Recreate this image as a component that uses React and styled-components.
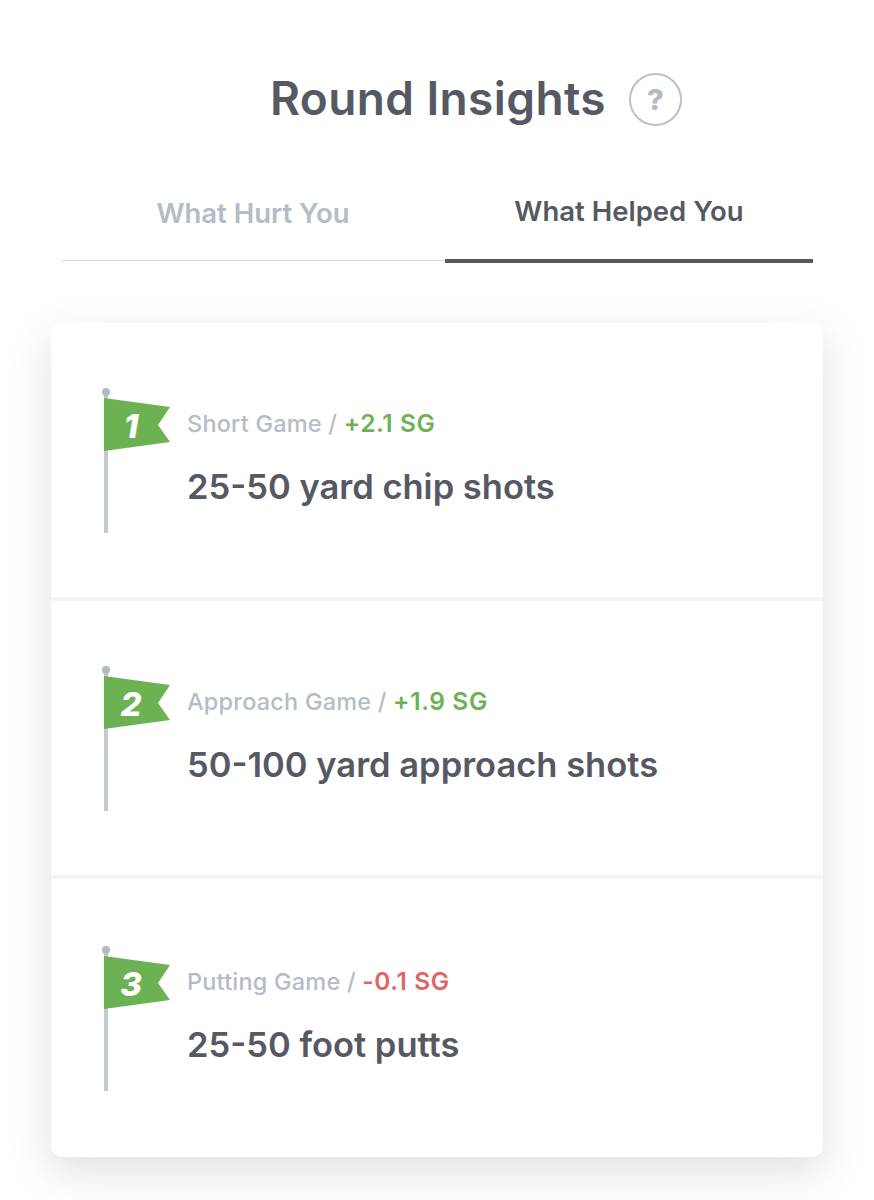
import React from 'react'
import styled, { createGlobalStyle } from 'styled-components'

const GlobalStyle = createGlobalStyle`
  html, body {
    margin: 0;
    padding: 0;
    background: #ffffff;
  }
  body {
    font-family: 'Inter', 'Noto Sans', sans-serif;
    overflow: hidden;
  }
`

const insights = [
  { rank: 1, area: 'Short Game', sg: '+2.1 SG', good: true, title: '25-50 yard chip shots' },
  { rank: 2, area: 'Approach Game', sg: '+1.9 SG', good: true, title: '50-100 yard approach shots' },
  { rank: 3, area: 'Putting Game', sg: '-0.1 SG', good: false, title: '25-50 foot putts' },
]

function Flag({ rank }) {
  return (
    <FlagWrap>
      <svg width="68" height="145" viewBox="0 0 68 145">
        <rect x="0" y="6" width="4" height="139" fill="#c3c9d0" />
        <circle cx="2" cy="4" r="4" fill="#b1bac5" />
        <path d="M0 10 L66 19 L54 37 L66 54 L0 63 Z" fill="#6cb253" />
      </svg>
      <FlagNumber>{rank}</FlagNumber>
    </FlagWrap>
  )
}

export default function App() {
  return (
    <Page>
      <GlobalStyle />
      <Header>
        <Title>Round Insights</Title>
        <HelpIcon>?</HelpIcon>
      </Header>
      <Tabs>
        <Tab>What Hurt You</Tab>
        <Tab $active>What Helped You</Tab>
      </Tabs>
      <Card>
        {insights.map((item) => (
          <Row key={item.rank}>
            <Flag rank={item.rank} />
            <RowText>
              <Meta>
                {item.area} / <Score $good={item.good}>{item.sg}</Score>
              </Meta>
              <RowTitle>{item.title}</RowTitle>
            </RowText>
          </Row>
        ))}
      </Card>
    </Page>
  )
}

const Page = styled.div`
  width: 874px;
  height: 1200px;
  padding-top: 68px;
  box-sizing: border-box;
  background: #ffffff;
  overflow: hidden;
`

const Header = styled.div`
  display: flex;
  align-items: center;
  gap: 23px;
  height: 60px;
  padding-left: 270px;
`

const Title = styled.h1`
  margin: 0;
  font-size: 46px;
  font-weight: 600;
  letter-spacing: 0.4px;
  line-height: 60px;
  color: #565964;
`

const HelpIcon = styled.span`
  display: flex;
  align-items: center;
  justify-content: center;
  width: 53px;
  height: 53px;
  margin-top: 3px;
  box-sizing: border-box;
  border: 2px solid #b9c1ca;
  border-radius: 50%;
  color: #b1bac5;
  font-size: 29px;
  font-weight: 800;
`

const Tabs = styled.div`
  display: grid;
  grid-template-columns: 384px 368px;
  align-items: start;
  margin: 55px 0 0 61px;
  width: 752px;
`

const Tab = styled.div`
  display: flex;
  justify-content: center;
  height: ${(p) => (p.$active ? '80px' : '78px')};
  box-sizing: border-box;
  padding-top: ${(p) => (p.$active ? '8px' : '10px')};
  font-size: 27.5px;
  font-weight: 600;
  line-height: 40px;
  color: ${(p) => (p.$active ? '#565964' : '#b4bcc6')};
  border-bottom: ${(p) => (p.$active ? '4px solid #565964' : '1px solid #d9dbdd')};
`

const Card = styled.div`
  display: flex;
  flex-direction: column;
  gap: 4px;
  width: 772px;
  margin: 60px 0 0 51px;
  border-radius: 12px;
  background: #f4f4f4;
  box-shadow: 0 14px 42px rgba(70, 75, 85, 0.18);
`

const Row = styled.div`
  display: flex;
  align-items: flex-start;
  height: 274px;
  box-sizing: border-box;
  padding: 65px 0 0 53px;
  background: #ffffff;

  &:first-child {
    border-radius: 12px 12px 0 0;
  }
  &:last-child {
    height: 278px;
    padding-top: 67px;
    border-radius: 0 0 12px 12px;
  }
`

const FlagWrap = styled.div`
  position: relative;
  width: 68px;
  height: 145px;
  flex: none;

  svg {
    display: block;
    overflow: visible;
  }
`

const FlagNumber = styled.span`
  position: absolute;
  left: 2px;
  top: 18px;
  width: 50px;
  text-align: center;
  font-size: 33px;
  font-weight: 800;
  font-style: italic;
  line-height: 40px;
  color: #ffffff;
`

const RowText = styled.div`
  display: flex;
  flex-direction: column;
  margin: 18px 0 0 15px;
`

const Meta = styled.div`
  font-size: 23.5px;
  font-weight: 500;
  letter-spacing: 0.2px;
  line-height: 34px;
  color: #b4bcc6;
`

const Score = styled.span`
  font-size: 24.5px;
  font-weight: 600;
  letter-spacing: 0.6px;
  color: ${(p) => (p.$good ? '#6cb253' : '#e06666')};
`

const RowTitle = styled.div`
  margin-top: 24px;
  font-size: 34.5px;
  font-weight: 600;
  line-height: 44px;
  color: #565964;
`
